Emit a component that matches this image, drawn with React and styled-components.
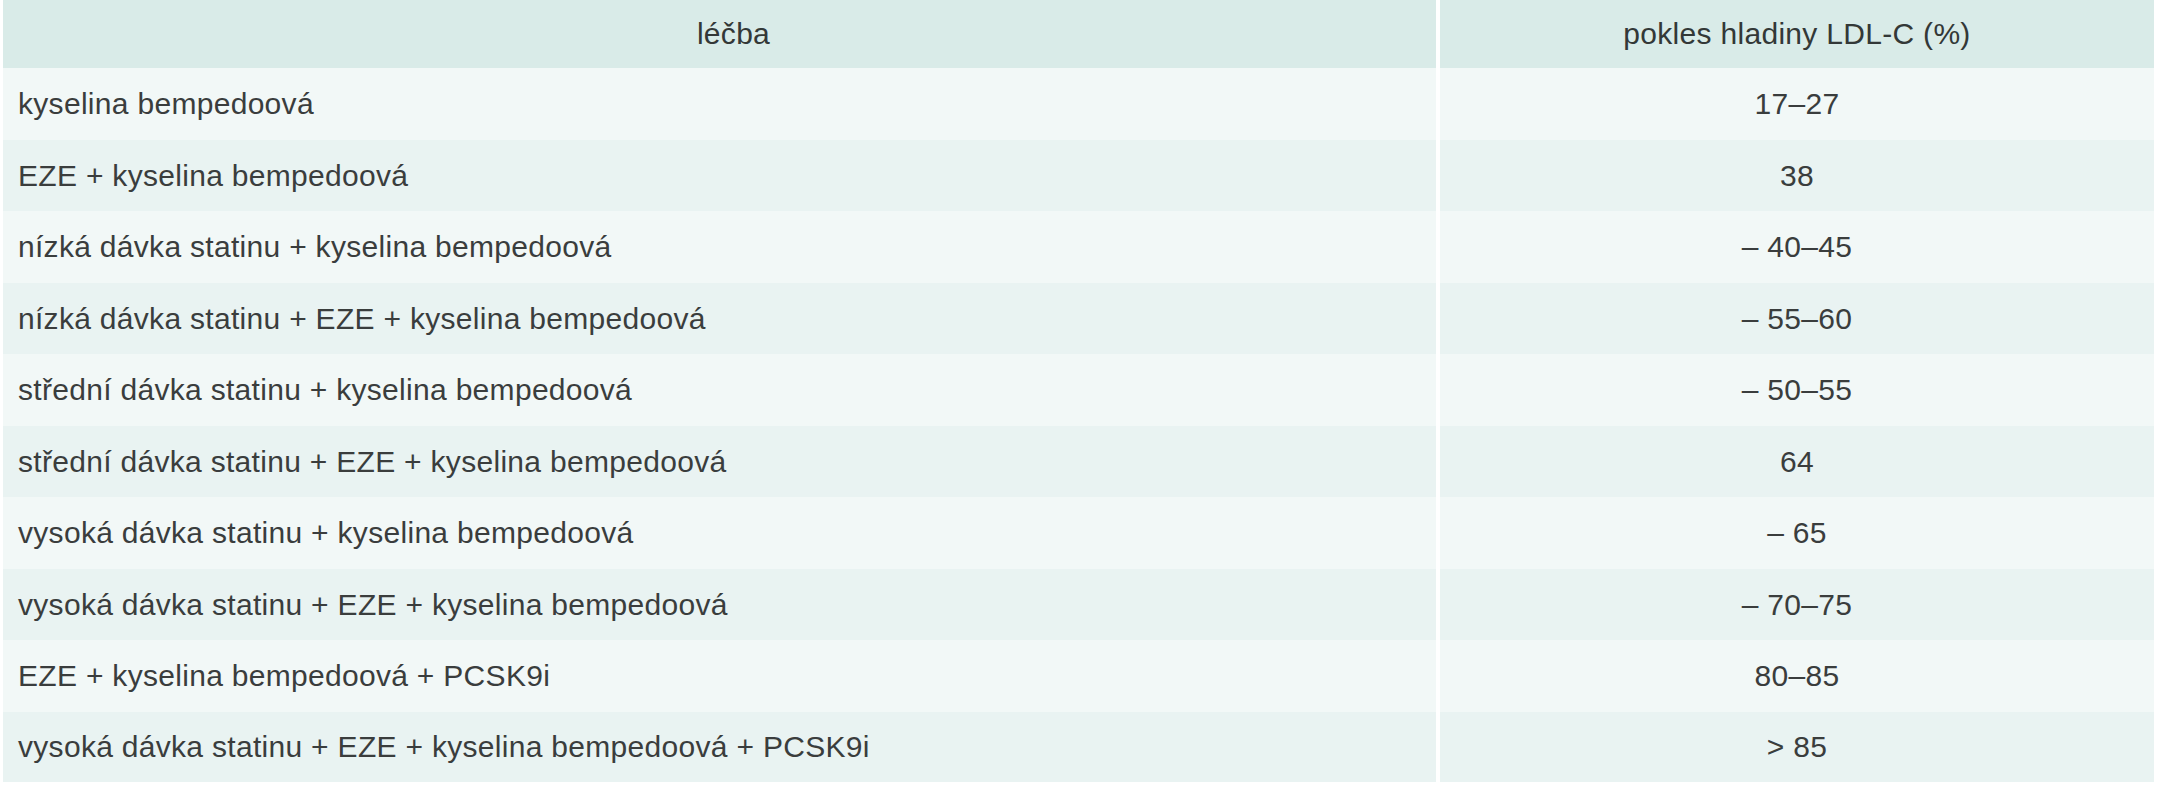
import styled, { createGlobalStyle } from "styled-components";

const GlobalStyle = createGlobalStyle`
  html, body {
    margin: 0;
    padding: 0;
    background: #FFFFFF;
  }
  body {
    font-family: 'Liberation Sans', Arial, sans-serif;
  }
`

const Wrap = styled.div`
  padding: 0 10px 18px 3px;
  width: 2164px;
  box-sizing: border-box;
`

const Table = styled.div`
  display: grid;
  grid-template-columns: 1433px 714px;
  column-gap: 4px;
  width: 2151px;
  background: #FFFFFF;
`

const HeadCell = styled.div`
  display: flex;
  align-items: center;
  justify-content: center;
  height: 68px;
  padding-left: ${props => props.$shift || 0}px;
  background: #D9EBE8;
  font-size: 30px;
  letter-spacing: 0.3px;
  color: #333837;
`

const Cell = styled.div`
  display: flex;
  align-items: center;
  justify-content: ${props => props.$center ? "center" : "flex-start"};
  height: ${props => props.$h}px;
  padding-left: ${props => props.$center ? 0 : 15}px;
  background: ${props => props.$odd ? "#E9F3F2" : "#F2F8F7"};
  font-size: 30px;
  letter-spacing: 0.3px;
  color: #3A3D3D;
  white-space: nowrap;
`

const rows = [
  ["kyselina bempedoová", "17–27"],
  ["EZE + kyselina bempedoová", "38"],
  ["nízká dávka statinu + kyselina bempedoová", "– 40–45"],
  ["nízká dávka statinu + EZE + kyselina bempedoová", "– 55–60"],
  ["střední dávka statinu + kyselina bempedoová", "– 50–55"],
  ["střední dávka statinu + EZE + kyselina bempedoová", "64"],
  ["vysoká dávka statinu + kyselina bempedoová", "– 65"],
  ["vysoká dávka statinu + EZE + kyselina bempedoová", "– 70–75"],
  ["EZE + kyselina bempedoová + PCSK9i", "80–85"],
  ["vysoká dávka statinu + EZE + kyselina bempedoová + PCSK9i", "> 85"],
];

// row heights add up to 714px (68 → 782)
const heights = [72, 71, 72, 71, 72, 71, 72, 71, 72, 70];

function App() {
  return (
    <Wrap>
      <GlobalStyle />
      <Table>
        <HeadCell $shift={28}>léčba</HeadCell>
        <HeadCell>pokles hladiny LDL-C (%)</HeadCell>
        {rows.map(([therapy, value], i) => [
          <Cell key={"t" + i} $odd={i % 2 === 1} $h={heights[i]}>{therapy}</Cell>,
          <Cell key={"v" + i} $odd={i % 2 === 1} $h={heights[i]} $center>{value}</Cell>,
        ])}
      </Table>
    </Wrap>
  );
}

export default App;
